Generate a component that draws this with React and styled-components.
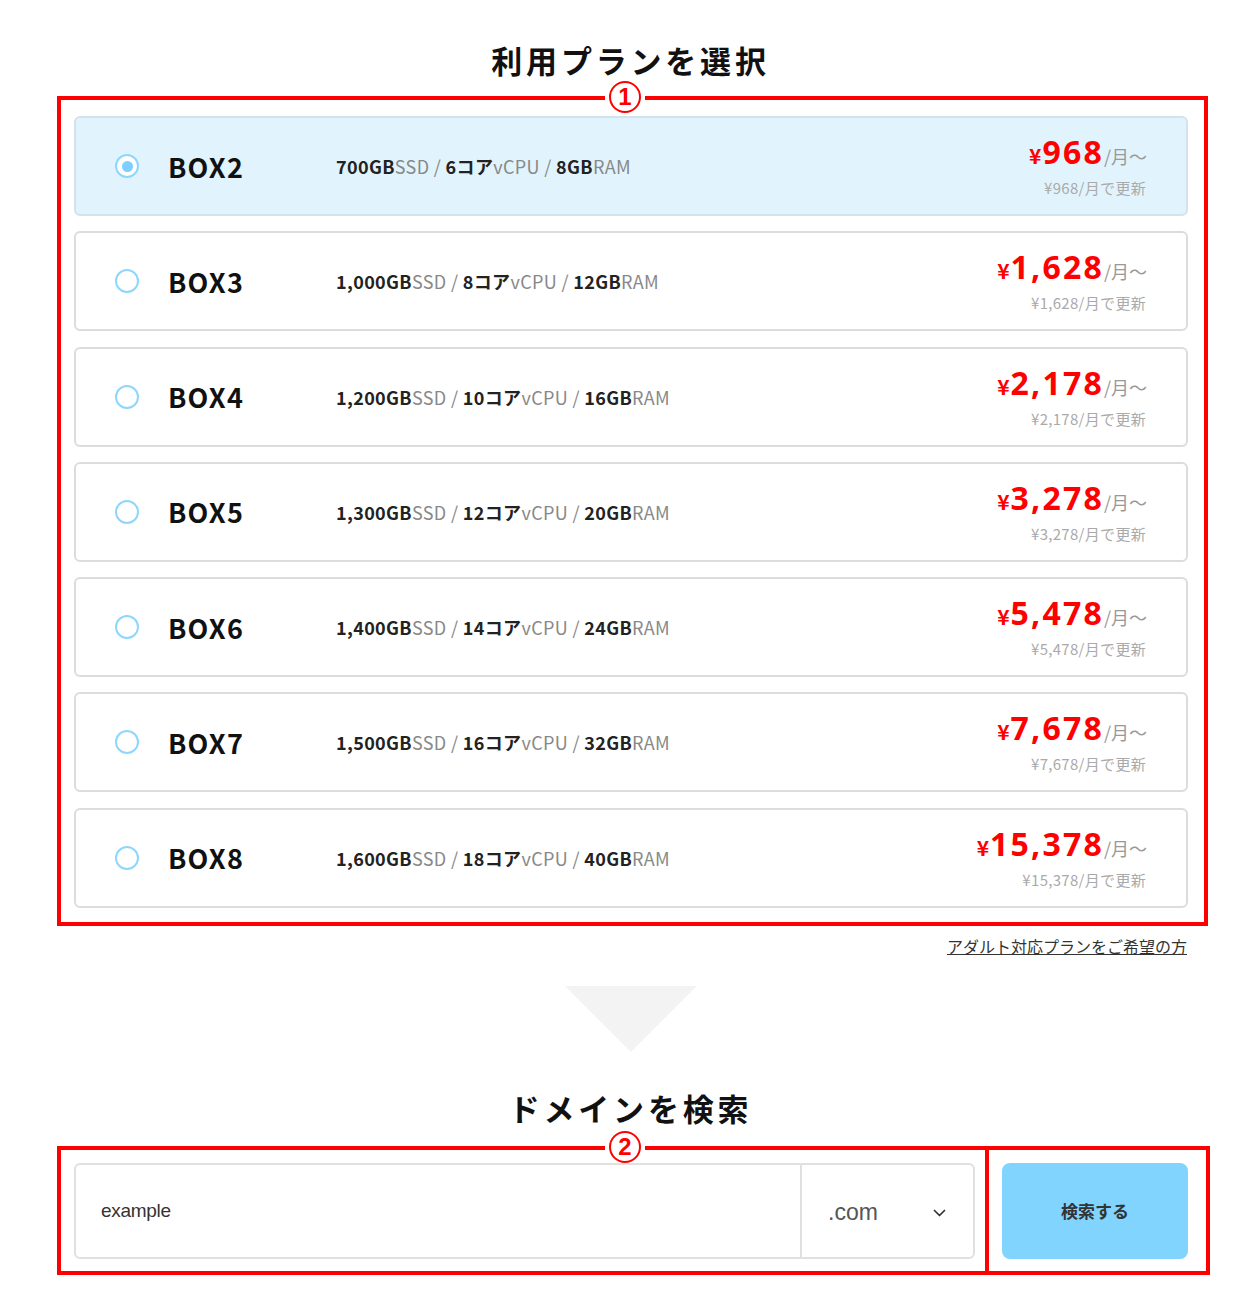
import styled, { createGlobalStyle } from 'styled-components';

const GlobalStyle = createGlobalStyle`
  body {
    margin: 0;
    background: #fff;
    font-family: "Noto Sans CJK JP", "Noto Sans", sans-serif;
    color: #111;
  }
`;

const plans = [
  { name: 'BOX2', ssd: '700', core: '6', ram: '8', price: '968', selected: true },
  { name: 'BOX3', ssd: '1,000', core: '8', ram: '12', price: '1,628' },
  { name: 'BOX4', ssd: '1,200', core: '10', ram: '16', price: '2,178' },
  { name: 'BOX5', ssd: '1,300', core: '12', ram: '20', price: '3,278' },
  { name: 'BOX6', ssd: '1,400', core: '14', ram: '24', price: '5,478' },
  { name: 'BOX7', ssd: '1,500', core: '16', ram: '32', price: '7,678' },
  { name: 'BOX8', ssd: '1,600', core: '18', ram: '40', price: '15,378' },
];

const Page = styled.div`
  width: 1153px;
  margin-left: 57px;
  padding: 39px 0 30px;
`;

const SectionTitle = styled.h2`
  margin: ${(p) => p.$top || 0}px 0 ${(p) => p.$bottom || 15}px -6px;
  text-align: center;
  font-size: 31px;
  line-height: 42px;
  font-weight: 700;
  letter-spacing: 3.8px;
  color: #111;
`;

const Marked = styled.div`
  position: relative;
  border: 4px solid #ff0000;
`;

const Badge = styled.span`
  position: absolute;
  top: -19px;
  left: 564px;
  transform: translateX(-50%);
  padding: 0 4px;
  background: #fff;
  display: flex;
`;

const BadgeCircle = styled.span`
  width: 28px;
  height: 28px;
  border: 2px solid #ff0000;
  border-radius: 50%;
  display: flex;
  align-items: center;
  justify-content: center;
  color: #ff0000;
  font-family: "Liberation Sans", Arial, sans-serif;
  font-weight: 700;
  font-size: 24px;
  line-height: 1;
`;

const PlanBox = styled(Marked)`
  width: 1151px;
  box-sizing: border-box;
  padding: 16px 16px 14px 13px;
  display: flex;
  flex-direction: column;
  gap: 15.3px;
`;

const PlanCard = styled.label`
  height: 100px;
  box-sizing: border-box;
  border: 2px solid ${(p) => (p.$selected ? '#d3e3ec' : '#dcdcdc')};
  border-radius: 6px;
  background: ${(p) => (p.$selected ? '#e1f4fd' : '#fff')};
  display: flex;
  align-items: center;
  padding: 0 39px 0 39px;
  cursor: pointer;
`;

const Radio = styled.span`
  width: 24px;
  height: 24px;
  box-sizing: border-box;
  border: 2px solid #8ed6fd;
  border-radius: 50%;
  background: #fff;
  display: flex;
  align-items: center;
  justify-content: center;
  margin-right: 29px;
  flex-shrink: 0;

  &::after {
    content: '';
    width: 11px;
    height: 11px;
    border-radius: 50%;
    background: #7ecffd;
    display: ${(p) => (p.$checked ? 'block' : 'none')};
  }
`;

const PlanName = styled.span`
  width: 168px;
  font-size: 27px;
  font-weight: 700;
  letter-spacing: 1.2px;
  color: #111;
`;

const Spec = styled.div`
  flex: 1;
  font-size: 18px;
  letter-spacing: 0.35px;
  color: #888;

  b {
    color: #222;
    font-weight: 700;
  }
`;

const PriceCol = styled.div`
  text-align: right;
  display: flex;
  flex-direction: column;
  align-items: flex-end;
  margin-top: 0;
`;

const PriceLine = styled.div`
  display: flex;
  align-items: baseline;
  line-height: 36px;
`;

const Yen = styled.span`
  color: #ff0000;
  font-size: 21px;
  font-weight: 700;
  margin-right: 1px;
`;

const Amount = styled.span`
  color: #ff0000;
  font-family: "Noto Sans", sans-serif;
  font-size: 32px;
  font-weight: 700;
  letter-spacing: 2.2px;
`;

const PerMonth = styled.span`
  color: #999;
  font-size: 18px;
`;

const Renewal = styled.div`
  color: #aaa;
  font-size: 15px;
  letter-spacing: 0.3px;
  line-height: 20px;
  margin-top: 4px;
  margin-right: 1px;
`;

const LinkRow = styled.div`
  width: 1151px;
  text-align: right;
  margin-top: 9px;
  line-height: 22px;
`;

const AdultLink = styled.a`
  font-size: 16px;
  color: #333;
  text-decoration: underline;
  margin-right: 21px;
`;

const Arrow = styled.div`
  width: 0;
  height: 0;
  margin: 29px 0 0 508px;
  border-left: 66px solid transparent;
  border-right: 66px solid transparent;
  border-top: 66px solid #f3f3f3;
`;

const SearchRow = styled.div`
  display: flex;
`;

const SearchBox = styled(Marked)`
  width: 932px;
  box-sizing: border-box;
  padding: 13px 10px 12px 13px;
`;

const ButtonBox = styled(Marked)`
  width: 221px;
  box-sizing: border-box;
  border-left: none;
  padding: 13px 18px 12px 13px;
`;

const InputWrap = styled.div`
  height: 96px;
  box-sizing: border-box;
  border: 2px solid #e0e0e0;
  border-radius: 6px;
  display: flex;
  background: #fff;
`;

const DomainInput = styled.input`
  flex: 1;
  border: none;
  outline: none;
  background: transparent;
  padding: 0 0 0 25px;
  font-family: "Liberation Sans", Arial, sans-serif;
  font-size: 19px;
  color: #333;
  letter-spacing: -0.3px;
`;

const TldSelect = styled.div`
  width: 173px;
  border-left: 2px solid #e0e0e0;
  display: flex;
  align-items: center;
  justify-content: space-between;
  padding: 4px 27px 0 26px;
  box-sizing: border-box;
  font-family: "Liberation Sans", Arial, sans-serif;
  font-size: 23px;
  color: #555;
`;

const SearchButton = styled.button`
  width: 186px;
  height: 96px;
  border: none;
  border-radius: 8px;
  background: #80d4fe;
  font-family: "Noto Sans CJK JP", sans-serif;
  font-size: 17px;
  font-weight: 700;
  color: #333;
  cursor: pointer;
`;

const Chevron = () => (
  <svg width="13" height="8" viewBox="0 0 13 8" fill="none">
    <path d="M1.5 1.5 L6.5 6.5 L11.5 1.5" stroke="#333" strokeWidth="1.7" strokeLinecap="round" strokeLinejoin="round" />
  </svg>
);

const App = () => {
  return (
    <>
      <GlobalStyle />
      <Page>
        <SectionTitle>利用プランを選択</SectionTitle>
        <PlanBox>
          <Badge>
            <BadgeCircle>1</BadgeCircle>
          </Badge>
          {plans.map((plan) => (
            <PlanCard key={plan.name} $selected={plan.selected}>
              <Radio $checked={plan.selected} />
              <PlanName>{plan.name}</PlanName>
              <Spec>
                <b>{plan.ssd}GB</b>SSD / <b>{plan.core}コア</b>vCPU / <b>{plan.ram}GB</b>RAM
              </Spec>
              <PriceCol>
                <PriceLine>
                  <Yen>¥</Yen>
                  <Amount>{plan.price}</Amount>
                  <PerMonth>/月～</PerMonth>
                </PriceLine>
                <Renewal>¥{plan.price}/月で更新</Renewal>
              </PriceCol>
            </PlanCard>
          ))}
        </PlanBox>
        <LinkRow>
          <AdultLink href="#">アダルト対応プランをご希望の方</AdultLink>
        </LinkRow>
        <Arrow />
        <SectionTitle $top={35} $bottom={17}>ドメインを検索</SectionTitle>
        <SearchRow>
          <SearchBox>
            <Badge>
              <BadgeCircle>2</BadgeCircle>
            </Badge>
            <InputWrap>
              <DomainInput defaultValue="example" />
              <TldSelect>
                <span>.com</span>
                <Chevron />
              </TldSelect>
            </InputWrap>
          </SearchBox>
          <ButtonBox>
            <SearchButton>検索する</SearchButton>
          </ButtonBox>
        </SearchRow>
      </Page>
    </>
  );
};

export default App;
